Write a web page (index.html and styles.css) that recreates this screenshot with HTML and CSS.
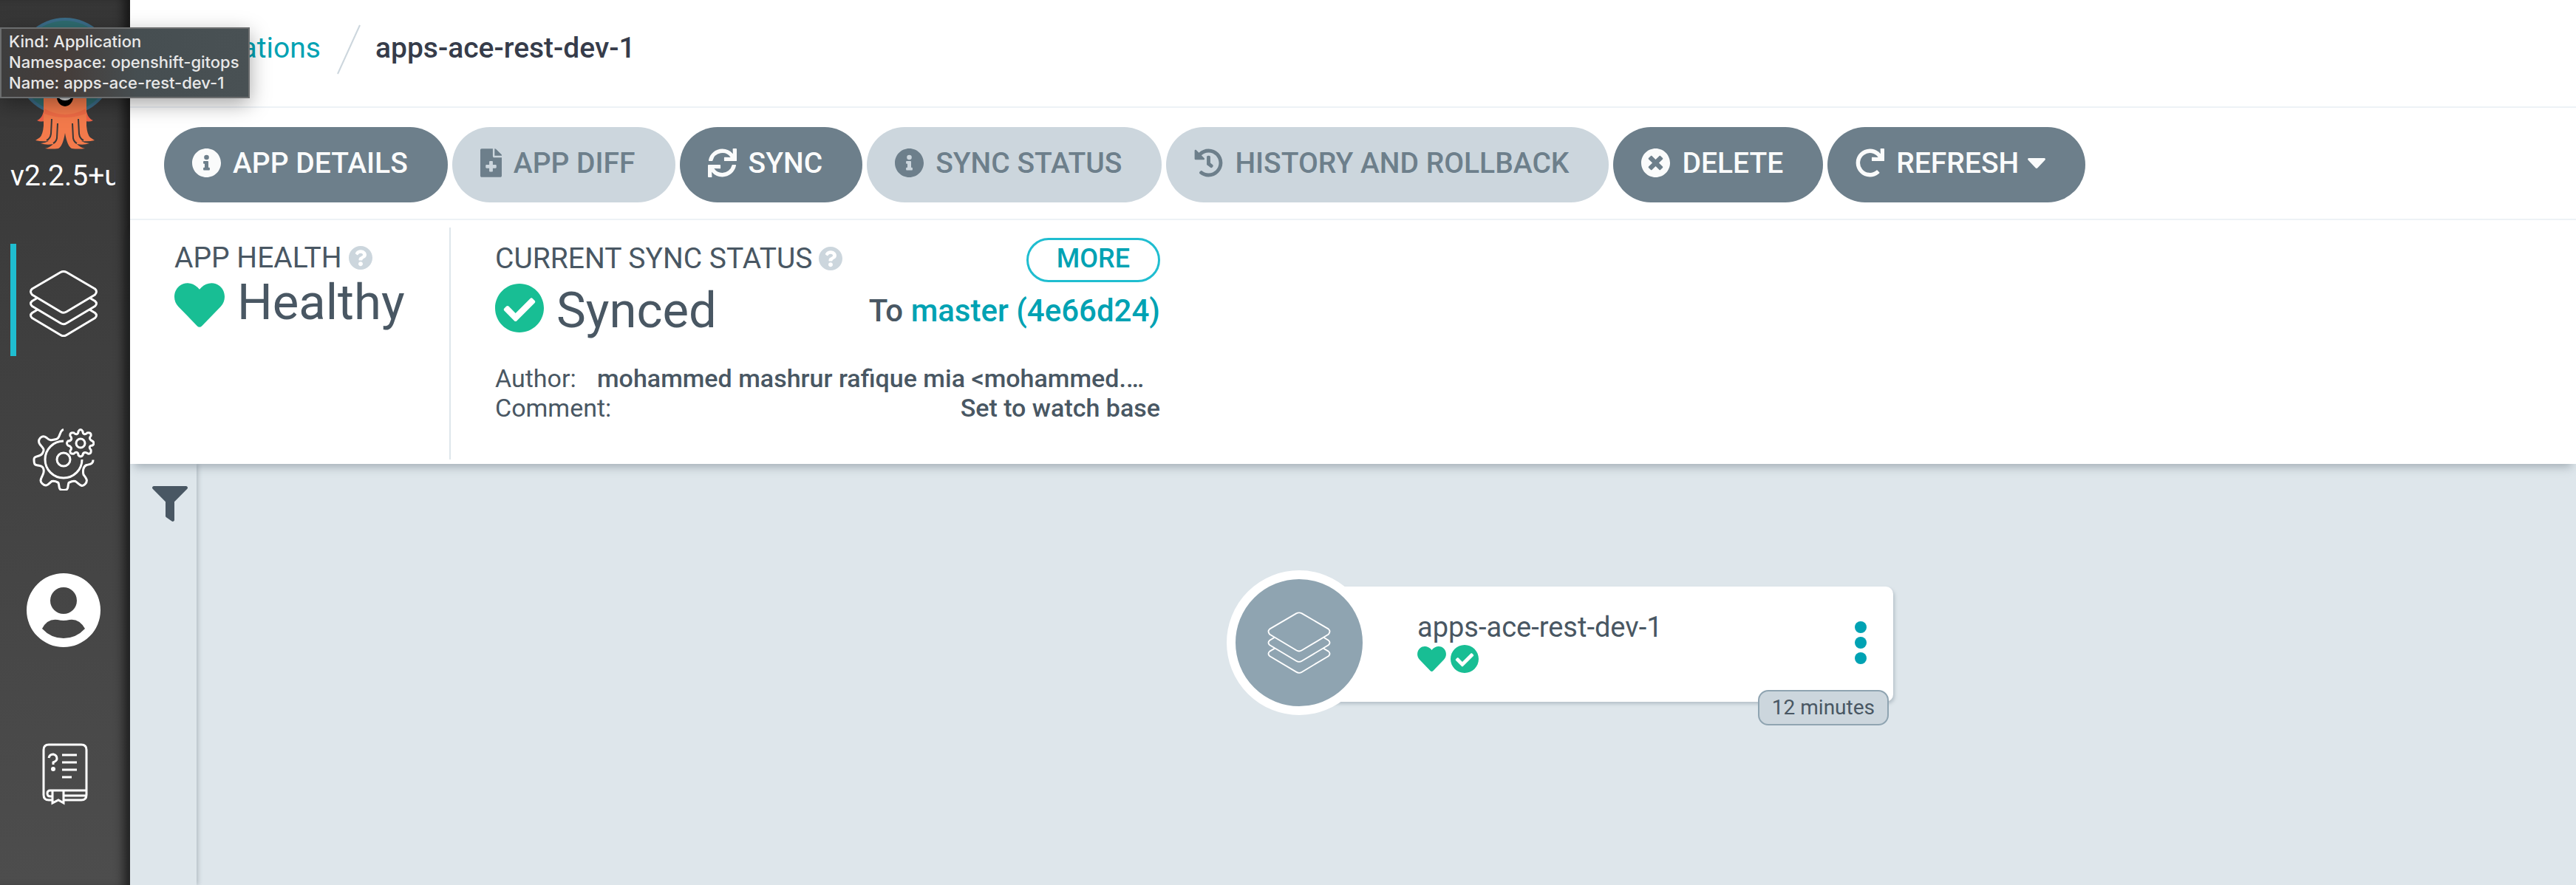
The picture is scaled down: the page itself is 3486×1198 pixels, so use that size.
FILE: index.html
```html
<!DOCTYPE html>
<html lang="en">
<head>
<meta charset="utf-8">
<title>apps-ace-rest-dev-1 - Argo CD</title>
<link rel="stylesheet" href="styles.css">
</head>
<body>
<svg class="sprite" aria-hidden="true">
  <symbol id="i-info" viewBox="8 8 496 496"><path d="M256 8C119 8 8 119 8 256s111 248 248 248 248-111 248-248S393 8 256 8zm0 110a42 42 0 1 1 0 84 42 42 0 0 1 0-84zm56 254a12 12 0 0 1-12 12h-88a12 12 0 0 1-12-12v-24a12 12 0 0 1 12-12h12v-64h-12a12 12 0 0 1-12-12v-24a12 12 0 0 1 12-12h64a12 12 0 0 1 12 12v100h12a12 12 0 0 1 12 12v24z"/></symbol>
  <symbol id="i-file" viewBox="0 0 384 512"><path d="M377 105L279 7c-4.500-4.500-10.600-7-17-7h-6v128h128v-6.100c0-6.300-2.500-12.400-7-16.900zM224 136V0H24C10.700 0 0 10.700 0 24v464c0 13.300 10.700 24 24 24h336c13.300 0 24-10.700 24-24V160H248c-13.200 0-24-10.800-24-24zm64 168v32c0 8.800-7.200 16-16 16h-48v48c0 8.800-7.200 16-16 16h-32c-8.800 0-16-7.200-16-16v-48h-48c-8.800 0-16-7.200-16-16v-32c0-8.800 7.200-16 16-16h48v-48c0-8.800 7.200-16 16-16h32c8.800 0 16 7.200 16 16v48h48c8.800 0 16 7.200 16 16z"/></symbol>
  <symbol id="i-sync" viewBox="0 0 512 512"><path d="M440.650 12.570l4 82.770A247.160 247.160 0 0 0 255.830 8C134.730 8 33.910 94.920 12.290 209.820A12 12 0 0 0 24.090 224h49.050a12 12 0 0 0 11.670-9.260 175.910 175.910 0 0 1 317-56.940l-101.460-4.860a12 12 0 0 0-12.570 12v47.410a12 12 0 0 0 12 12H500a12 12 0 0 0 12-12V12a12 12 0 0 0-12-12h-47.370a12 12 0 0 0-11.980 12.570zM255.830 432a175.610 175.610 0 0 1-146-77.800l101.800 4.870a12 12 0 0 0 12.570-12v-47.400a12 12 0 0 0-12-12H12a12 12 0 0 0-12 12V500a12 12 0 0 0 12 12h47.350a12 12 0 0 0 12-12.600l-4.150-82.570A247.170 247.170 0 0 0 255.830 504c121.110 0 221.930-86.920 243.550-201.820a12 12 0 0 0-11.800-14.180h-49.050a12 12 0 0 0-11.670 9.260A175.860 175.860 0 0 1 255.830 432z"/></symbol>
  <symbol id="i-history" viewBox="0 0 512 512"><path d="M504 255.500c.3 136.600-111.200 248.400-247.800 248.500-59 0-113.200-20.500-155.800-54.900-11.100-8.900-11.900-25.500-1.800-35.600l11.300-11.300c8.600-8.600 22.400-9.600 31.900-2C173.100 425.100 212.800 440 256 440c101.700 0 184-82.300 184-184 0-101.700-82.300-184-184-184-48.800 0-93.100 19-126.100 49.900l50.800 50.800c10.100 10.100 2.900 27.300-11.300 27.300H24c-8.800 0-16-7.200-16-16V38.600c0-14.300 17.200-21.400 27.300-11.300l49.400 49.400C129.200 34.100 189.600 8 256 8c136.800 0 247.700 110.800 248 247.500zM323.100 334.500l9.800-12.600c8.100-10.500 6.300-25.500-4.200-33.700L288 256.300V152c0-13.300-10.700-24-24-24h-16c-13.300 0-24 10.700-24 24v135.700l65.400 50.900c10.500 8.100 25.500 6.300 33.700-4.100z"/></symbol>
  <symbol id="i-times" viewBox="8 8 496 496"><path d="M256 8C119 8 8 119 8 256s111 248 248 248 248-111 248-248S393 8 256 8zm121.600 313.100c4.700 4.700 4.700 12.300 0 17L338 377.600c-4.700 4.700-12.300 4.700-17 0L256 312l-65.100 65.600c-4.700 4.700-12.300 4.700-17 0L134.400 338c-4.700-4.700-4.700-12.300 0-17l65.600-65-65.600-65.100c-4.700-4.700-4.700-12.300 0-17l39.600-39.600c4.700-4.700 12.300-4.700 17 0l65 65.700 65.100-65.600c4.700-4.700 12.300-4.700 17 0l39.600 39.600c4.700 4.700 4.700 12.300 0 17L312 256l65.600 65.100z"/></symbol>
  <symbol id="i-redo" viewBox="0 0 512 512"><path d="M500.330 0h-47.410a12 12 0 0 0-12 12.570l4 82.760A247.420 247.420 0 0 0 256 8C119.340 8 7.900 119.530 8 256.190 8.100 393.070 119.100 504 256 504a247.100 247.100 0 0 0 166.180-63.910 12 12 0 0 0 .48-17.430l-34-34a12 12 0 0 0-16.380-.55A176 176 0 1 1 402.100 157.800l-101.530-4.870a12 12 0 0 0-12.570 12v47.410a12 12 0 0 0 12 12h200.330a12 12 0 0 0 12-12V12a12 12 0 0 0-12-12z"/></symbol>
  <symbol id="i-caret" viewBox="0 0 24 14"><path d="M2 0h20c2 0 2.500 1.500 1.300 2.700L13.400 13.200c-.8 1-2 1-2.800 0L.7 2.700C-.5 1.500 0 0 2 0z"/></symbol>
  <symbol id="i-help" viewBox="8 8 496 496"><path d="M504 256c0 137-111 248-248 248S8 393 8 256C8 119.100 119 8 256 8s248 111.100 248 248zM262.700 90c-54.500 0-89.300 23-116.500 63.800-3.500 5.300-2.400 12.400 2.700 16.300l34.700 26.300c5.200 3.900 12.600 3 16.700-2.100 17.900-22.700 30.100-35.800 57.300-35.800 20.400 0 45.700 13.100 45.700 33 0 15-12.400 22.700-32.500 34C247.100 238.500 216 254.900 216 296v4c0 6.600 5.400 12 12 12h56c6.600 0 12-5.400 12-12v-1.300c0-28.500 83.200-29.600 83.200-106.700 0-58-60.200-102-116.500-102zM256 338c-25.400 0-46 20.600-46 46s20.600 46 46 46 46-20.600 46-46-20.600-46-46-46z"/></symbol>
  <symbol id="i-heart" viewBox="0 32 512 448"><path d="M462.300 62.600C407.500 15.900 326 24.300 275.700 76.200L256 96.500l-19.700-20.300C186.100 24.300 104.500 15.900 49.700 62.600c-62.800 53.600-66.100 149.800-9.900 207.900l193.500 199.800c12.500 12.900 32.800 12.900 45.300 0l193.500-199.800c56.300-58.100 53-154.300-9.800-207.900z"/></symbol>
  <symbol id="i-check" viewBox="8 8 496 496"><path d="M504 256c0 137-111 248-248 248S8 393 8 256 119 8 256 8s248 111 248 248zM227.300 387.300l184-184c6.200-6.200 6.200-16.400 0-22.600l-22.600-22.600c-6.200-6.200-16.400-6.200-22.600 0L216 308.100l-70.100-70.100c-6.200-6.200-16.400-6.200-22.600 0l-22.600 22.600c-6.200 6.200-6.200 16.400 0 22.600l104 104c6.200 6.300 16.400 6.300 22.600.1z"/></symbol>
  <symbol id="i-filter" viewBox="0 0 512 512"><path d="M488 0H24C2.700 0-8 25.900 7.100 41L192 225.900V432c0 7.800 3.800 15.200 10.200 19.700l80 56C298 518.700 320 507.500 320 488V225.900L505 41C520 25.900 509.300 0 488 0z"/></symbol>
  <symbol id="i-layers" viewBox="0 0 92 90"><g fill="none" stroke="currentColor" stroke-linejoin="round"><path d="M42 2.500q4-2 8 0L88.500 25q4 3.500 0 8L50 56q-4 2.500-8 0L3.500 33q-4-4.500 0-8z"/><path d="M11 37l-7.500 4.500q-4 3.500 0 7L42 71.500q4 2.500 8 0l38.500-23q4-3.500 0-7L81 37M11 53l-7.500 4.500q-4 3.500 0 7L42 87.500q4 2.500 8 0l38.500-23q4-3.500 0-7L81 53"/></g></symbol>
</svg>

<div class="app">
  <nav class="sidebar" aria-label="Main">
    <div class="brand">
      <svg class="logo" viewBox="0 0 136 180" aria-hidden="true">
        <circle cx="68" cy="67" r="66" fill="#3b6c88"/>
        <circle cx="68" cy="67" r="62" fill="#2f6c70"/>
        <path d="M40 122c-1 9-4 16-10 18 4 2 8 2 12 0zM96 122c1 9 4 16 10 18-4 2-8 2-12 0z" fill="#ed6145"/>
        <path d="M39 40q29-36 58 0v107q1 12 5 16l6 4q-8 2-18 1 5 3 11 3-8 3-17 1 5 5 11 6-9 1-18 0-6-3-9-21-3 18-9 21-9 1-18 0 6-1 11-6-9 2-17-1 5 0 11-3-10 1-18-1l6-4q4-4 5-16z" fill="#f37a4b"/>
        <path d="M40 124q28 16 56 0v7q-28 10-56 0z" fill="#ef6b45"/>
        <path d="M50 138l-1 20q-1 7-6 9M58 144l-1 20q-1 5-5 7M78 144l1 20q1 5 5 7M86 138l1 20q1 7 6 9" fill="none" stroke="#383838" stroke-width="2"/>
        <path d="M56 106h24q-2 14-12 15-10-1-12-15z" fill="#000"/>
        <path d="M58 106h20q-2 7-10 7t-10-7z" fill="#ddd"/>
      </svg>
      <span class="version">v2.2.5+unknown</span>
    </div>
    <a class="nav-item active" href="#applications" aria-label="Applications"><svg class="nav-layers"><use href="#i-layers"/></svg></a>
    <a class="nav-item settings" href="#settings" aria-label="Settings">
      <svg class="nav-gear" viewBox="0 0 84 84" fill="none" stroke="#fff" stroke-width="3">
        <path d="M42 1.500c-6 1-4 12-10 13-5 1-8 3-13-2-7-5-13 3-9 9 3 4 7 6 4 11-2 7-12 3-12 9 0 7 0 8 8 9 6 1 6 8 4 12-2 5-5 8-1 12 6 6 9 0 13-3 5-1 7 1 9 2 2 5-1 10 7 10s5-5 7-10c2-1 5-3 9-2 5 3 8 9 13 4s1-9-2-13c-1-4-1-11 4-13 4-1 9-1 9-7"/>
        <path d="M42 17A25 25 0 1 0 67 42"/><circle cx="42" cy="42" r="9"/><circle cx="65" cy="20" r="6"/>
        <path d="M62 4q3-5 6 0c0 4 3 5 6 2q6-1 5 4c-3 3-1 6 2 7q4 3 0 6c-4 0-5 3-2 6q1 6-4 5c-4-3-7-1-7 2q-3 4-6 0c0-4-3-5-6-2q-6 1-5-4c3-3 1-6-3-7q-3-3 0-6c5 0 6-4 3-7q-1-5 5-4c3 3 6 2 6-2z"/>
      </svg>
    </a>
    <a class="nav-item user" href="#user" aria-label="User info">
      <svg class="nav-user" viewBox="0 0 100 100"><path fill="#fff" fill-rule="evenodd" d="M50 0a50 50 0 1 1 0 100A50 50 0 0 1 50 0zm0 19a18 18 0 1 0 0 36 18 18 0 0 0 0-36zM21 75q12 13 29 13t29-13q-8-14-21-12-8 2-16 0-14-2-21 12z"/></svg>
    </a>
    <a class="nav-item" href="#help" aria-label="Documentation">
      <svg class="nav-book" viewBox="0 0 62 84" fill="none" stroke="#fff" stroke-width="3">
        <path d="M14 77H9q-7 0-7-7V9q0-7 7-7h44q7 0 7 7v61q0 7-7 7H29M60 64H11q-4 0-4 4t4 4h3M29 71h31M14 65v16l8-4 7 4V65M27 16h20M27 26h20M27 36h20M27 46h13"/>
        <path d="M9 20q1-5 6-5 5 1 5 6 0 3-5 5v3"/><circle cx="15" cy="35" r="3" fill="#fff" stroke="none"/>
      </svg>
    </a>
  </nav>

  <div class="main">
    <header class="topbar">
      <a class="crumb" href="#applications">Applications</a>
      <svg class="slash" viewBox="0 0 32 68"><path d="M1 67L31 1" stroke="#ccd6dd" stroke-width="2"/></svg>
      <h1 class="crumb-current">apps-ace-rest-dev-1</h1>
    </header>

    <div class="toolbar">
      <button class="btn" type="button"><svg class="btn-icon"><use href="#i-info"/></svg>APP DETAILS</button>
      <button class="btn" type="button" disabled><svg class="btn-icon file"><use href="#i-file"/></svg>APP DIFF</button>
      <button class="btn" type="button"><svg class="btn-icon"><use href="#i-sync"/></svg>SYNC</button>
      <button class="btn" type="button" disabled><svg class="btn-icon"><use href="#i-info"/></svg>SYNC STATUS</button>
      <button class="btn" type="button" disabled><svg class="btn-icon"><use href="#i-history"/></svg>HISTORY AND ROLLBACK</button>
      <button class="btn" type="button"><svg class="btn-icon"><use href="#i-times"/></svg>DELETE</button>
      <button class="btn" type="button"><svg class="btn-icon"><use href="#i-redo"/></svg>REFRESH<svg class="caret"><use href="#i-caret"/></svg></button>
    </div>

    <section class="status">
      <div class="health">
        <h2 class="label">APP HEALTH <svg class="help"><use href="#i-help"/></svg></h2>
        <div class="value"><svg class="heart"><use href="#i-heart"/></svg>Healthy</div>
      </div>
      <div class="sync">
        <div class="sync-head">
          <h2 class="label">CURRENT SYNC STATUS <svg class="help"><use href="#i-help"/></svg></h2>
          <button class="more" type="button">MORE</button>
        </div>
        <div class="sync-state">
          <div class="value"><svg class="check"><use href="#i-check"/></svg>Synced</div>
          <div class="revision">To <a href="#revision">master (4e66d24)</a></div>
        </div>
        <dl class="meta">
          <dt>Author:</dt><dd class="author">mohammed mashrur rafique mia &lt;mohammed.mia@example.com&gt;</dd>
          <dt>Comment:</dt><dd>Set to watch base</dd>
        </dl>
      </div>
    </section>

    <div class="content">
      <aside class="filters"><button class="filter-btn" type="button" aria-label="Filters"><svg><use href="#i-filter"/></svg></button></aside>
      <div class="graph">
        <article class="node">
          <div class="node-icon"><svg><use href="#i-layers"/></svg></div>
          <div class="node-body">
            <div class="node-name">apps-ace-rest-dev-1</div>
            <div class="node-status"><svg class="heart"><use href="#i-heart"/></svg><svg class="check"><use href="#i-check"/></svg></div>
          </div>
          <button class="node-menu" type="button" aria-label="Actions"><i></i><i></i><i></i></button>
          <span class="age">12 minutes</span>
        </article>
      </div>
    </div>
  </div>
</div>
<div class="tooltip" role="tooltip">Kind: Application<br>Namespace: openshift-gitops<br>Name: apps-ace-rest-dev-1</div>
</body>
</html>
```
FILE: styles.css
```css
* { box-sizing: border-box; }

body {
  margin: 0;
  font-family: Roboto, "Liberation Sans", sans-serif;
  color: #495763;
  background: #dee6eb;
}

h1, h2, dl, dd { margin: 0; }
a { color: #00a2b3; text-decoration: none; }
button { font-family: inherit; cursor: pointer; }
svg { display: block; flex: none; fill: currentColor; }
.sprite { position: absolute; width: 0; height: 0; }

.app { display: flex; min-height: 100vh; }

/* Sidebar */
.sidebar {
  width: 176px;
  flex: none;
  background: linear-gradient(to bottom, #363636, #4d4d4d);
  box-shadow: inset -16px 0 14px -8px rgba(0, 0, 0, 0.6);
  color: #fff;
}
.brand { height: 330px; padding: 23px 18px 0 14px; overflow: hidden; }
.logo { width: 136px; height: 180px; margin-left: 6px; }
.version {
  display: block;
  margin-top: 12px;
  margin-right: 2px;
  overflow: hidden;
  white-space: nowrap;
  font-size: 39px;
  line-height: 46px;
}
.nav-item {
  display: flex;
  align-items: center;
  height: 152px;
  margin: 0 14px;
  padding-left: 22px;
  color: #fff;
}
.nav-item.active { margin-bottom: 64px; border-left: 8px solid #1fbdd0; padding: 10px 0 0 18px; }
.nav-item.settings { margin-bottom: 52px; }
.nav-item.user { margin-bottom: 70px; }
.nav-layers { width: 92px; height: 90px; stroke-width: 3px; }
.nav-gear { width: 84px; height: 84px; margin-left: 8px; fill: none; }
.nav-user { width: 100px; height: 100px; }
.nav-book { width: 62px; height: 84px; margin-left: 21px; fill: none; }

/* Header */
.main { flex: 1; min-width: 0; display: flex; flex-direction: column; }
.topbar {
  display: flex;
  align-items: center;
  height: 146px;
  padding: 0 42px 14px;
  border-bottom: 2px solid #edf2f6;
  background: #fff;
}
.crumb { font-size: 39px; }
.slash { width: 32px; height: 68px; margin: 4px 20px 0 22px; }
.crumb-current { font-size: 39px; font-weight: 500; color: #363c4a; }

.toolbar {
  display: flex;
  gap: 6px;
  padding: 26px 46px 22px;
  border-bottom: 2px solid #edf2f6;
  background: #fff;
}
.btn {
  display: flex;
  align-items: center;
  height: 102px;
  padding: 0 54px 4px 38px;
  border: 0;
  border-radius: 51px;
  background: #6d7f8b;
  color: #fafbfb;
  font-size: 39px;
  font-weight: 500;
  white-space: nowrap;
}
.btn:disabled { background: #ccd6dd; color: #6d7f8b; }
.btn-icon { width: 39px; height: 39px; margin: 0 16px 2px 0; }
.btn-icon.file { width: 29px; }
.caret { width: 24px; height: 14px; margin-left: 12px; }

/* Status panel */
.status {
  position: relative;
  display: flex;
  height: 330px;
  padding: 10px 0 6px 60px;
  background: #fff;
  box-shadow: 0 10px 12px -6px rgba(73, 87, 99, 0.4);
}
.label {
  display: flex;
  align-items: center;
  gap: 9px;
  font-size: 39px;
  line-height: 48px;
  font-weight: 400;
}
.help { width: 32px; height: 32px; color: #ccd6dd; }
.value { display: flex; align-items: center; gap: 17px; font-size: 67px; line-height: 72px; }
.heart, .check { color: #18be94; }
.value .heart { width: 68px; height: 60px; margin-top: 8px; }
.value .check { width: 66px; height: 66px; margin-bottom: 6px; }
.health { width: 374px; padding-top: 17px; border-right: 2px solid #dee6eb; }
.sync { width: 960px; padding: 14px 0 0 60px; }
.sync-head { display: flex; justify-content: space-between; height: 60px; align-items: center; }
.sync-head .label { padding-bottom: 4px; }
.more {
  height: 60px;
  padding: 0 38px 4px;
  border: 3px solid #1fbdd0;
  border-radius: 30px;
  background: #fff;
  color: #00a2b3;
  font-size: 36px;
  font-weight: 500;
}
.sync-state { display: flex; justify-content: space-between; align-items: center; margin-top: 2px; }
.revision { font-size: 42px; font-weight: 500; }
.meta {
  display: grid;
  grid-template-columns: 138px 1fr;
  margin-top: 36px;
  font-size: 34px;
  line-height: 40px;
}
.meta dt { white-space: nowrap; }
.meta dd { min-width: 0; font-weight: 500; text-align: right; white-space: nowrap; }
.meta .author { overflow: hidden; text-overflow: ellipsis; text-align: left; }

/* Resource tree */
.content { flex: 1; display: flex; }
.filters { width: 90px; box-shadow: 2px 0 6px rgba(73, 87, 99, 0.3); }
.filter-btn { display: block; margin: 30px 0 0 30px; padding: 0; border: 0; background: none; color: #495763; }
.filter-btn svg { width: 48px; height: 48px; }
.graph { flex: 1; padding: 144px 0 0 1394px; }
.node { position: relative; display: flex; align-items: center; width: 902px; height: 196px; }
.node::before {
  content: "";
  position: absolute;
  inset: 22px 0 18px 98px;
  border-radius: 10px;
  background: #fff;
  box-shadow: 2px 3px 4px rgba(109, 127, 139, 0.35);
}
.node-icon {
  position: relative;
  display: flex;
  align-items: center;
  justify-content: center;
  width: 196px;
  height: 196px;
  border: 12px solid #fff;
  border-radius: 50%;
  background: #8fa4b1;
  color: #fff;
}
.node-icon svg { width: 86px; height: 84px; stroke-width: 2px; }
.node-body { position: relative; flex: 1; padding-left: 62px; }
.node-name { font-size: 38px; line-height: 44px; }
.node-status { display: flex; align-items: center; gap: 6px; height: 42px; }
.node-status .heart { width: 39px; height: 34px; }
.node-status .check { width: 38px; height: 38px; }
.node-menu {
  position: relative;
  display: grid;
  gap: 5px;
  margin-right: 36px;
  padding: 0;
  border: 0;
  background: none;
}
.node-menu i { width: 16px; height: 16px; border-radius: 50%; background: #00a2b3; }
.age {
  position: absolute;
  right: 6px;
  bottom: -14px;
  padding: 0 17px;
  border: 2px solid #8fa4b1;
  border-radius: 14px;
  background: #ccd6dd;
  font-size: 28px;
  line-height: 44px;
}

/* Hover tooltip floats over the page corner */
.tooltip {
  position: absolute;
  top: 37px;
  left: 0;
  padding: 3px 12px 5px 10px;
  border: 2px solid #6b6d6e;
  background: linear-gradient(to right, #3e3e3e, #453d3a 26%, #464e51 55%, #495154);
  box-shadow: 0 8px 26px rgba(0, 0, 0, 0.35);
  color: #e8e8e8;
  font-family: Inter, "Liberation Sans", sans-serif;
  font-size: 22px;
  font-weight: 500;
  line-height: 28px;
  white-space: nowrap;
}
```
